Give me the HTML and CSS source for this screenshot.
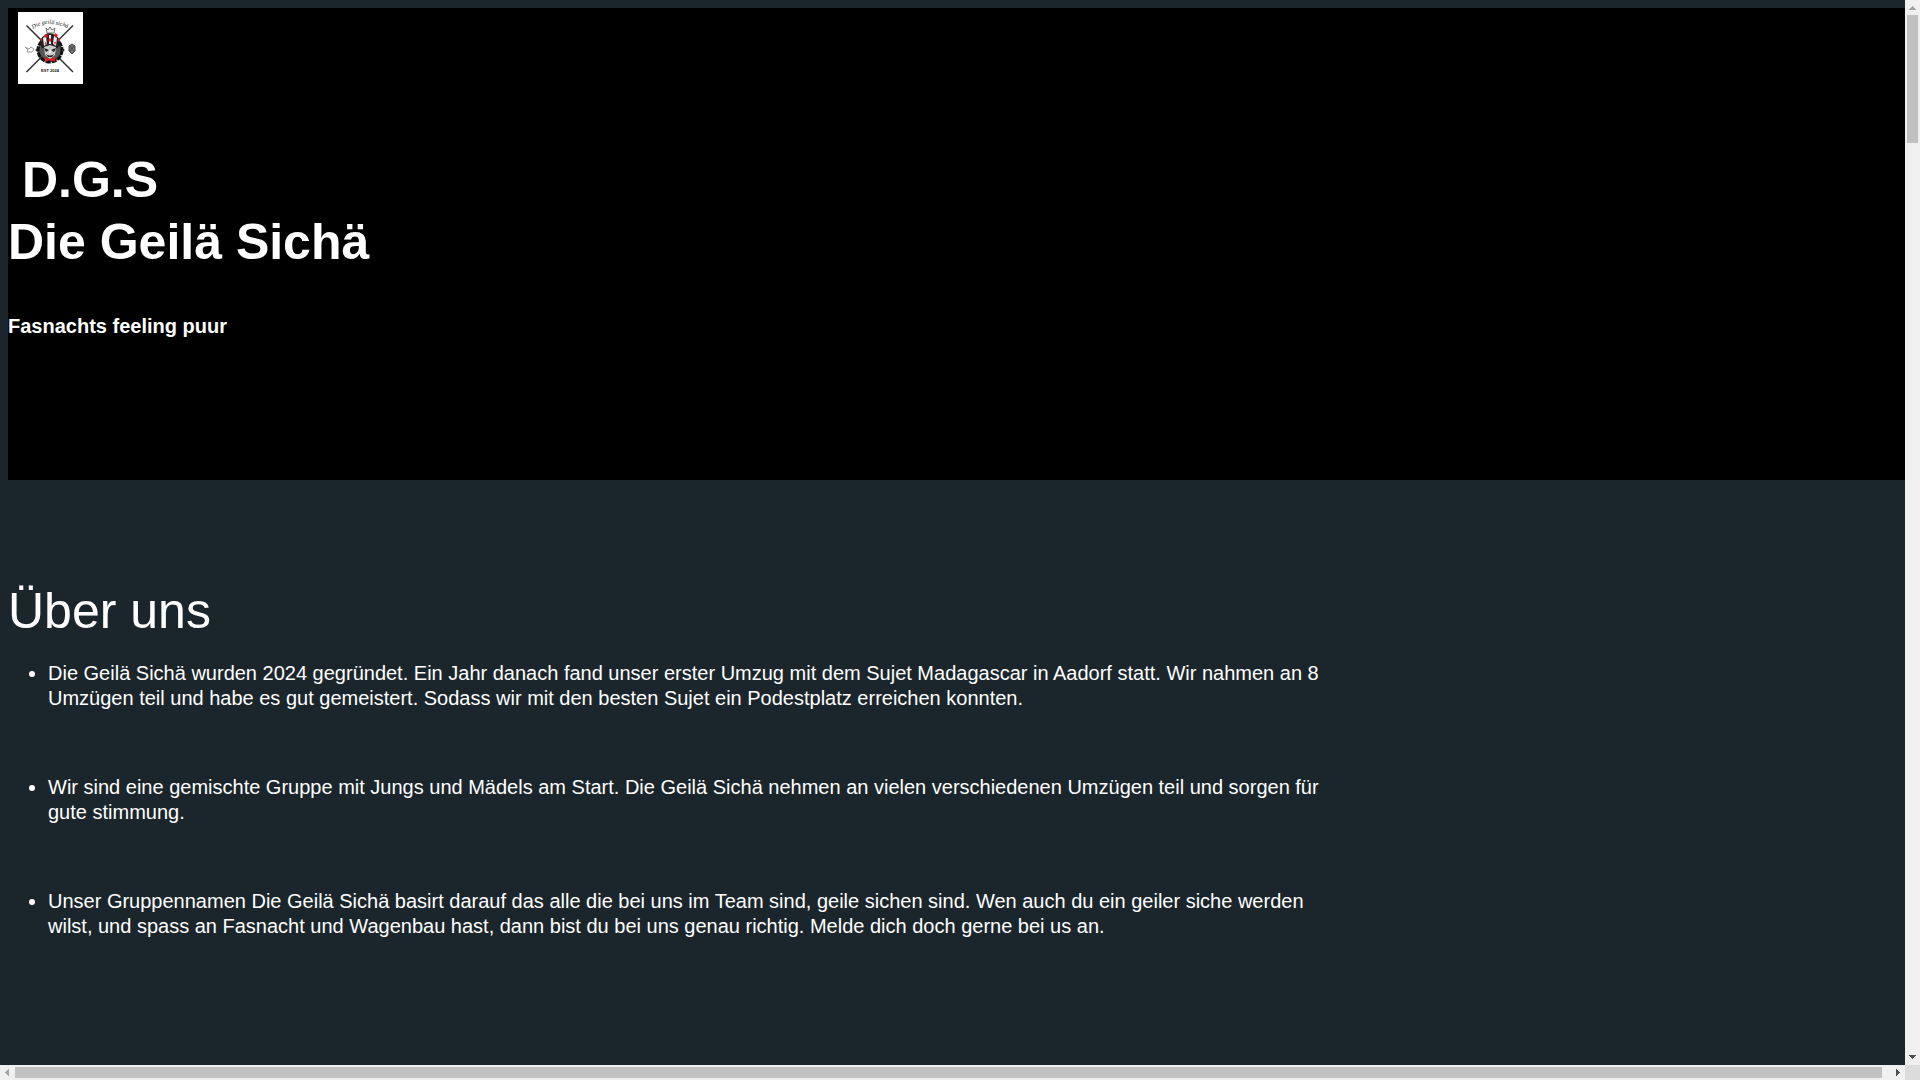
FILE: index.html
```html
<!DOCTYPE html>
<html lang="de">
<head>
    <meta charset="UTF-8">
    <meta name="viewport" content="width=device-width, initial-scale=1.0">
    <title>Die Geilä Sichä</title>
    <link rel="stylesheet" href="styles.css">
</head>
<body>
    <div class="page">
        <header class="header">
            <svg class="logo" viewBox="0 0 65 72" role="img" aria-label="Die Geilä Sichä Logo">
                <rect width="65" height="72" fill="#fff"/>
                <!-- crossed sticks -->
                <path d="M8.500 13.500 L55 60 M55 13.500 L8.500 60" stroke="#333" stroke-width="1.500"/>
                <!-- lettering -->
                <path id="bogen" d="M15 17 Q31 5 60 21" fill="none"/>
                <text class="logo-script"><textPath href="#bogen">Die geilä sichä</textPath></text>
                <!-- round frame -->
                <circle cx="32" cy="38" r="12" fill="#555" stroke="#111" stroke-width="3" stroke-dasharray="5 1"/>
                <path d="M17 38 l3 -2 v4z M47 38 l-3 -2 v4z" fill="#222"/>
                <!-- jester hat -->
                <path d="M24 36 Q19 27 27 23 L31 20 L37 23 Q45 27 40 36z" fill="#222"/>
                <path d="M28 16 l2 2 2-3 2 3 3-2 -1 5 h-7z" fill="#eee" stroke="#777" stroke-width="1"/>
                <path d="M25 26 l3 -2 1 8 -3 2z M36 24 l3 2 -1 8 -3 -2z M31 23 h2 v9 h-2z" fill="#eee"/>
                <path d="M27 22 l3 1 -1 3 -3-1z M32 26 l2 2 -2 2 -2 -2z M37 21 l3 2 -2 3 -2-3z M22 27 l2-1 v4z M42 27 l-2-1 v4z M27 30 l2 1 -2 2z M36 30 l2 0 -1 3z" fill="#e31b23"/>
                <!-- face -->
                <path d="M26 35 L32 33 L38 35 L37 43 L32 47 L27 43z" fill="#ccc"/>
                <path d="M26 36 l5 2 -3 2z M38 36 l-5 2 3 2z M28 42 q4 3 8 0 l-2 3 h-4z" fill="#222"/>
                <path d="M32 37 l-1 4 h2z" fill="#fff"/>
                <path d="M27 45 l5 2 5 -2 v5 l-5 -2 -5 2z" fill="#e31b23"/>
                <!-- small ornaments -->
                <path d="M7 35 l4 2 2 -2 3 2 -2 3 -5 0 1 -2z" fill="none" stroke="#999" stroke-width="1"/>
                <path d="M51 34 l3 -2 3 2 v5 l-3 3 -3 -3z M52 34 l4 5 M56 34 l-4 5" fill="#777" stroke="#444" stroke-width="1"/>
                <text class="logo-year" x="32" y="60">EST 2024</text>
            </svg>
            <h1>&nbsp;D.G.S<br>Die Geilä Sichä</h1>
            <p class="slogan">Fasnachts feeling puur</p>
        </header>

        <main class="about">
            <h2>Über uns</h2>
            <ul>
                <li>Die Geilä Sichä wurden 2024 gegründet. Ein Jahr danach fand unser erster Umzug mit dem Sujet Madagascar in Aadorf statt. Wir nahmen an 8 Umzügen teil und habe es gut gemeistert. Sodass wir mit den besten Sujet ein Podestplatz erreichen konnten.</li>
                <li>Wir sind eine gemischte Gruppe mit Jungs und Mädels am Start. Die Geilä Sichä nehmen an vielen verschiedenen Umzügen teil und sorgen für gute stimmung.</li>
                <li>Unser Gruppennamen Die Geilä Sichä basirt darauf das alle die bei uns im Team sind, geile sichen sind. Wen auch du ein geiler siche werden wilst, und spass an Fasnacht und Wagenbau hast, dann bist du bei uns genau richtig. Melde dich doch gerne bei us an.</li>
            </ul>
        </main>
    </div>

    <div class="scrollbar vertical">
        <button class="arrow off" aria-label="Nach oben"><svg viewBox="0 0 15 15"><path d="M7 6h1v1h1v1h1v1h1v1H4V9h1V8h1V7h1z"/></svg></button>
        <div class="track"><div class="thumb"></div></div>
        <button class="arrow" aria-label="Nach unten"><svg viewBox="0 0 15 15"><path d="M4 5h7v1h-1v1H9v1H8v1H7V8H6V7H5V6H4z"/></svg></button>
    </div>
    <div class="scrollbar horizontal">
        <button class="arrow off" aria-label="Nach links"><svg viewBox="0 0 15 15"><path d="M9 4v7H8v-1H7V9H6V8H5V7h1V6h1V5h1V4z"/></svg></button>
        <div class="track"><div class="thumb"></div></div>
        <button class="arrow" aria-label="Nach rechts"><svg viewBox="0 0 15 15"><path d="M6 4v7h1v-1h1V9h1V8h1V7H9V6H8V5H7V4z"/></svg></button>
    </div>
    <div class="corner"></div>
</body>
</html>
```

FILE: styles.css
```css
body {
    display: grid;
    grid-template-columns: minmax(0, 1fr) 15px;
    grid-template-rows: minmax(0, 1fr) 15px;
    height: 100vh;
    margin: 0;
    background-color: #1b262c;
    color: white;
    font-family: "Liberation Sans", Arial, sans-serif;
    font-size: 20px;
    line-height: 25px;
}

.page {
    padding: 8px 0 0 8px;
    overflow: auto;
    scrollbar-width: none;
}

.header {
    min-width: calc(100% + 8px);
    box-sizing: border-box;
    padding: 4px 0 141px;
    background-color: black;
}

.logo {
    display: block;
    width: 65px;
    height: 72px;
    margin-left: 10px;
}

.logo-script {
    font-family: "Liberation Serif", serif;
    font-style: italic;
    font-size: 6px;
    fill: #111;
}

.logo-year {
    font-size: 4px;
    font-weight: bold;
    text-anchor: middle;
    fill: #111;
}

h1,
h2 {
    margin: 0;
    font-size: 50px;
    line-height: 62px;
}

h1 {
    padding-top: 65px;
}

h2 {
    font-weight: normal;
}

.slogan {
    margin: 41px 0 0;
    font-weight: bold;
}

.about {
    padding-top: 100px;
}

ul {
    max-width: 1280px;
    margin: 19px 0 0;
    padding-left: 40px;
}

li {
    margin-bottom: 64px;
}

/* scrollbars */
.scrollbar {
    display: flex;
    background-color: #f0f0f0;
}

.vertical {
    flex-direction: column;
}

.arrow {
    width: 15px;
    height: 15px;
    padding: 0;
    border: none;
    background: none;
    fill: #505050;
}

.arrow.off {
    fill: #a3a3a3;
}

.arrow svg {
    display: block;
    width: 15px;
    height: 15px;
    shape-rendering: crispEdges;
}

.track {
    flex: 1;
}

.thumb {
    background-color: #c1c1c1;
}

.vertical .track {
    padding: 0 2px;
}

.vertical .thumb {
    height: 128px;
}

.horizontal .track {
    display: flex;
    padding: 2px 8px 2px 0;
}

.horizontal .thumb {
    flex: 1;
}

.corner {
    background-color: #dcdcdc;
}
```
